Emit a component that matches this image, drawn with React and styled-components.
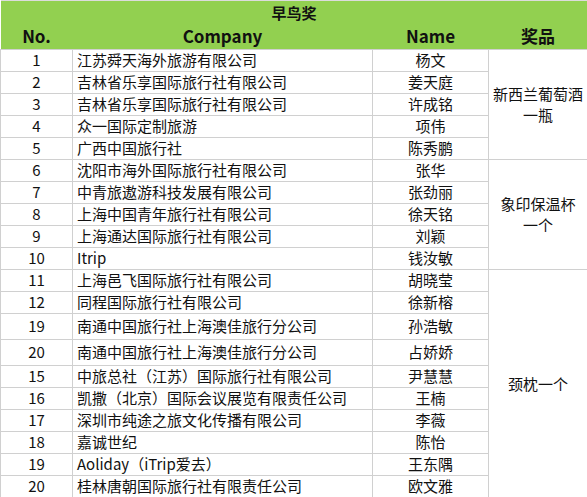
import React from 'react';
import styled, { createGlobalStyle } from 'styled-components';

const rows = [
    { no: 1, company: '江苏舜天海外旅游有限公司', name: '杨文' },
    { no: 2, company: '吉林省乐享国际旅行社有限公司', name: '姜天庭' },
    { no: 3, company: '吉林省乐享国际旅行社有限公司', name: '许成铭' },
    { no: 4, company: '众一国际定制旅游', name: '项伟' },
    { no: 5, company: '广西中国旅行社', name: '陈秀鹏' },
    { no: 6, company: '沈阳市海外国际旅行社有限公司', name: '张华' },
    { no: 7, company: '中青旅遨游科技发展有限公司', name: '张劲丽' },
    { no: 8, company: '上海中国青年旅行社有限公司', name: '徐天铭' },
    { no: 9, company: '上海通达国际旅行社有限公司', name: '刘颖' },
    { no: 10, company: 'Itrip', name: '钱汝敏' },
    { no: 11, company: '上海邑飞国际旅行社有限公司', name: '胡晓莹' },
    { no: 12, company: '同程国际旅行社有限公司', name: '徐新榕' },
    { no: 19, company: '南通中国旅行社上海澳佳旅行分公司', name: '孙浩敏', tall: true },
    { no: 20, company: '南通中国旅行社上海澳佳旅行分公司', name: '占娇娇', tall: true },
    { no: 15, company: '中旅总社（江苏）国际旅行社有限公司', name: '尹慧慧' },
    { no: 16, company: '凯撒（北京）国际会议展览有限责任公司', name: '王楠' },
    { no: 17, company: '深圳市纯途之旅文化传播有限公司', name: '李薇' },
    { no: 18, company: '嘉诚世纪', name: '陈怡' },
    { no: 19, company: 'Aoliday（iTrip爱去）', name: '王东隅' },
    { no: 20, company: '桂林唐朝国际旅行社有限责任公司', name: '欧文雅' },
];

// prize cells are merged over a run of rows, keyed by the row index they start on
const prizes = {
    0: { span: 5, lines: ['新西兰葡萄酒', '一瓶'] },
    5: { span: 5, lines: ['象印保温杯', '一个'] },
    10: { span: 10, lines: ['颈枕一个'] },
};

const App = () => {
    return (
        <>
            <GlobalStyle />
            <Sheet>
                <colgroup>
                    <col style={{ width: 72 }} />
                    <col style={{ width: 300 }} />
                    <col style={{ width: 116 }} />
                    <col style={{ width: 99 }} />
                </colgroup>
                <thead>
                    <TitleRow>
                        <TitleCell colSpan={4}>早鸟奖</TitleCell>
                    </TitleRow>
                    <HeadRow>
                        <HeadCell>No.</HeadCell>
                        <HeadCell>Company</HeadCell>
                        <HeadCell>Name</HeadCell>
                        <HeadCell>奖品</HeadCell>
                    </HeadRow>
                </thead>
                <tbody>
                    {rows.map((row, i) => (
                        <Row key={i} $tall={row.tall}>
                            <Cell $align="center">{row.no}</Cell>
                            <Cell $align="left">{row.company}</Cell>
                            <Cell $align="center">{row.name}</Cell>
                            {prizes[i] && (
                                <PrizeCell rowSpan={prizes[i].span}>
                                    {prizes[i].lines.map((line) => (
                                        <PrizeLine key={line}>{line}</PrizeLine>
                                    ))}
                                </PrizeCell>
                            )}
                        </Row>
                    ))}
                </tbody>
            </Sheet>
        </>
    );
};

const GlobalStyle = createGlobalStyle`
    html, body {
        margin: 0;
        padding: 0;
        background: #ffffff;
    }

    body {
        font-family: "Noto Sans CJK SC", "Noto Sans", sans-serif;
        color: #111111;
    }
`;

const Sheet = styled.table`
    width: 587px;
    table-layout: fixed;
    border-collapse: collapse;
    border-top: 1px solid #dcdcdc;
    font-size: 15px;
`;

const TitleRow = styled.tr`
    height: 24px;
    background: #92d050;
`;

const HeadRow = styled.tr`
    height: 24px;
    background: #92d050;
`;

const TitleCell = styled.th`
    padding: 0;
    font-size: 15px;
    font-weight: 700;
    text-align: center;
    line-height: 22px;
`;

const HeadCell = styled.th`
    padding: 0 0 2px;
    font-size: 17px;
    font-weight: 700;
    text-align: center;
    line-height: 22px;
    color: #111111;
`;

const Row = styled.tr`
    height: ${(p) => (p.$tall ? 26 : 22)}px;
`;

const Cell = styled.td`
    padding: 0 4px;
    border: 1px solid #d0d0d0;
    text-align: ${(p) => p.$align};
    line-height: 20px;
    white-space: nowrap;
    overflow: hidden;
`;

const PrizeCell = styled.td`
    padding: 0 2px;
    border: 1px solid #d0d0d0;
    text-align: center;
    vertical-align: middle;
`;

const PrizeLine = styled.div`
    line-height: 21px;
`;

export default App;
